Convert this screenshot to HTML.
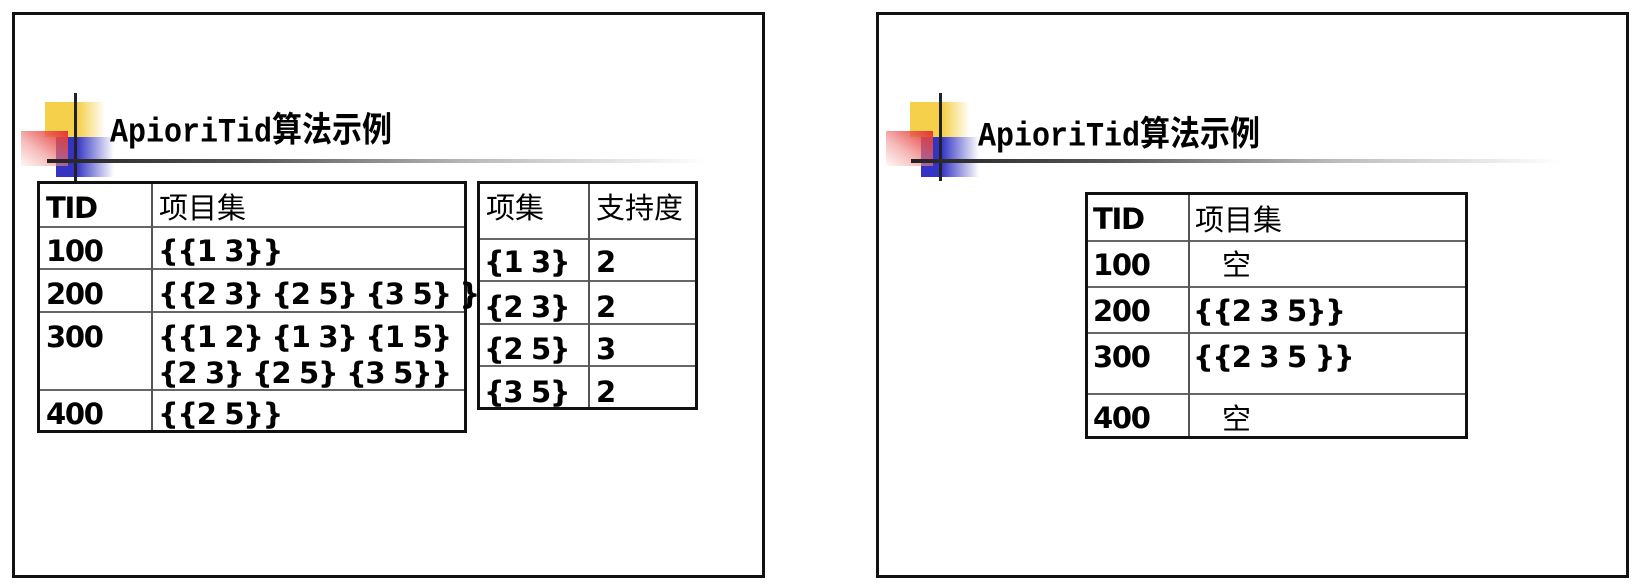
<!DOCTYPE html>
<html><head><meta charset="utf-8"><style>
body{margin:0;width:1636px;height:586px;background:#fff;position:relative;overflow:hidden}
.a{position:absolute}
.slide{position:absolute;border:3px solid #111;box-sizing:border-box;top:12px;height:566px}
.y{background:linear-gradient(to right,#f5d04a 0,#f5d04a 55%,rgba(245,208,74,0) 100%)}
.b{background:linear-gradient(to right,#3333c4 0,#3333c4 35%,rgba(51,51,196,0) 100%)}
.r{background:linear-gradient(to bottom left,#e43530 0%,rgba(240,140,140,.6) 60%,rgba(255,230,230,.3) 100%)}
.vl{background:#222;width:3px}
.hl{height:4px;background:linear-gradient(to right,#222 0%,#555 30%,#bbb 65%,rgba(255,255,255,0) 100%)}
.title{font-family:"Liberation Mono","Noto Sans CJK SC",monospace;font-size:30px;line-height:34px;color:#000;white-space:nowrap;font-weight:bold;transform:scaleY(1.15);transform-origin:0 50%}
.title span{font-family:"Noto Sans CJK SC",sans-serif;font-weight:bold}
.tb{position:absolute;border:3px solid #111;box-sizing:border-box}
.hr{position:absolute;left:0;right:0;height:2px;background:#666}
.vr{position:absolute;top:0;bottom:0;width:2px;background:#555}
.t{position:absolute;font-family:"DejaVu Sans","Liberation Sans",sans-serif;font-weight:bold;font-size:29px;line-height:30px;white-space:nowrap;color:#000;letter-spacing:-1.3px}
.c{position:absolute;font-family:"Noto Sans CJK SC",sans-serif;font-size:29px;line-height:30px;white-space:nowrap;color:#000}
</style></head><body>

<div class="slide" style="left:12px;width:753px"></div>
<div class="slide" style="left:876px;width:753px"></div>

<div class="a y" style="left:45px;top:102px;width:60px;height:35px"></div>
<div class="a b" style="left:56px;top:137px;width:58px;height:40px"></div>
<div class="a r" style="left:21px;top:131px;width:47px;height:35px"></div>
<div class="a vl" style="left:74px;top:93px;height:88px"></div>
<div class="a hl" style="left:47px;top:159px;width:660px"></div>
<div class="a title" style="left:110px;top:110px">ApioriTid<span>算法示例</span></div>

<div class="a y" style="left:910px;top:102px;width:60px;height:35px"></div>
<div class="a b" style="left:921px;top:137px;width:58px;height:40px"></div>
<div class="a r" style="left:886px;top:131px;width:47px;height:35px"></div>
<div class="a vl" style="left:939px;top:93px;height:88px"></div>
<div class="a hl" style="left:911px;top:159px;width:650px"></div>
<div class="a title" style="left:978px;top:114px">ApioriTid<span>算法示例</span></div>

<div class="tb" style="left:37px;top:181px;width:430px;height:252px">
  <div class="hr" style="top:42px"></div>
  <div class="hr" style="top:84px"></div>
  <div class="hr" style="top:127px"></div>
  <div class="hr" style="top:205px"></div>
  <div class="vr" style="left:111px"></div>
</div>
<div class="t" style="left:46px;top:193px">TID</div>
<div class="c" style="left:159px;top:191px">项目集</div>
<div class="t" style="left:46px;top:236px">100</div>
<div class="t" style="left:158px;top:236px">{{1 3}}</div>
<div class="t" style="left:46px;top:279px">200</div>
<div class="t" style="left:158px;top:279px">{{2 3} {2 5} {3 5} }</div>
<div class="t" style="left:46px;top:322px">300</div>
<div class="t" style="left:158px;top:322px">{{1 2} {1 3} {1 5}</div>
<div class="t" style="left:158px;top:358px">{2 3} {2 5} {3 5}}</div>
<div class="t" style="left:46px;top:399px">400</div>
<div class="t" style="left:158px;top:399px">{{2 5}}</div>

<div class="tb" style="left:477px;top:181px;width:221px;height:229px">
  <div class="hr" style="top:54px"></div>
  <div class="hr" style="top:96px"></div>
  <div class="hr" style="top:139px"></div>
  <div class="hr" style="top:181px"></div>
  <div class="vr" style="left:108px"></div>
</div>
<div class="c" style="left:486px;top:191px">项集</div>
<div class="c" style="left:596px;top:191px">支持度</div>
<div class="t" style="left:484px;top:247px">{1 3}</div>
<div class="t" style="left:596px;top:247px">2</div>
<div class="t" style="left:484px;top:292px">{2 3}</div>
<div class="t" style="left:596px;top:292px">2</div>
<div class="t" style="left:484px;top:334px">{2 5}</div>
<div class="t" style="left:596px;top:334px">3</div>
<div class="t" style="left:484px;top:377px">{3 5}</div>
<div class="t" style="left:596px;top:377px">2</div>

<div class="tb" style="left:1085px;top:192px;width:383px;height:247px">
  <div class="hr" style="top:45px"></div>
  <div class="hr" style="top:91px"></div>
  <div class="hr" style="top:137px"></div>
  <div class="hr" style="top:198px"></div>
  <div class="vr" style="left:100px"></div>
</div>
<div class="t" style="left:1093px;top:204px">TID</div>
<div class="c" style="left:1195px;top:203px">项目集</div>
<div class="t" style="left:1093px;top:250px">100</div>
<div class="c" style="left:1222px;top:248px">空</div>
<div class="t" style="left:1093px;top:296px">200</div>
<div class="t" style="left:1193px;top:296px">{{2 3 5}}</div>
<div class="t" style="left:1093px;top:342px">300</div>
<div class="t" style="left:1193px;top:342px">{{2 3 5 }}</div>
<div class="t" style="left:1093px;top:403px">400</div>
<div class="c" style="left:1222px;top:402px">空</div>

</body></html>
